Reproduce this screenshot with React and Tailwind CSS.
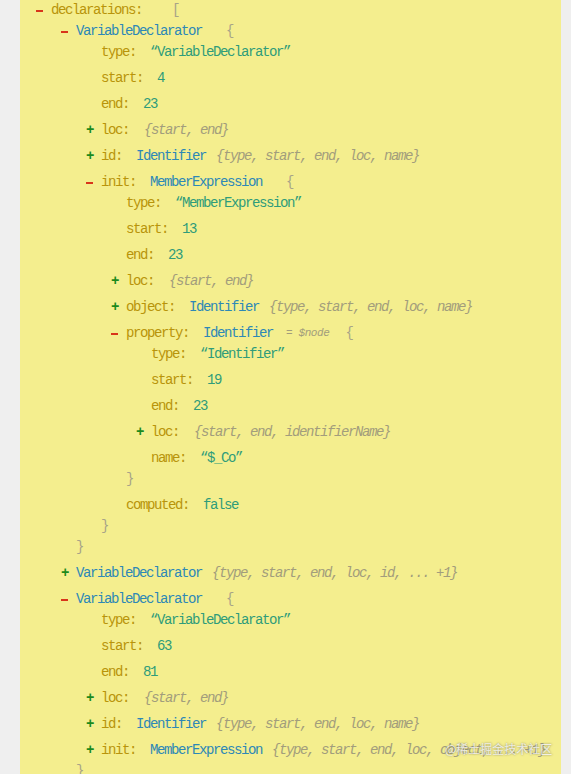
import React from "react";

function Sign({ t }) {
  if (t === "-") {
    return (
      <span className="-ml-[15px] w-[15px] h-[21px] shrink-0 flex items-center">
        <span className="block w-[7px] h-[2px] bg-[#d8351b]" />
      </span>
    );
  }
  return (
    <span className="-ml-[15px] w-[15px] shrink-0 font-bold text-[#1c8a1c]">+</span>
  );
}

function Line({ children }) {
  return <div className="h-[21px] flex items-center whitespace-pre">{children}</div>;
}

function Key({ k }) {
  return <span className="text-[#b8940a]">{k}:</span>;
}

function Leaf({ k, v }) {
  return (
    <Line>
      <Key k={k} />
      <span className="ml-[14px] text-[#2f9c7a]">{v}</span>
    </Line>
  );
}

function Summary({ children, ml }) {
  return <span className={`${ml} italic text-[#a29d7c]`}>{children}</span>;
}

function Collapsed({ k, type, sum }) {
  return (
    <Line>
      <Sign t="+" />
      {k && <Key k={k} />}
      {type && <span className={`${k ? "ml-[14px]" : ""} text-[#2d88b6]`}>{type}</span>}
      <Summary ml={type ? "ml-[10px]" : "ml-[15px]"}>{sum}</Summary>
    </Line>
  );
}

function Expanded({ k, type, extra, open, openMl, close, children }) {
  return (
    <div className="flex flex-col">
      <Line>
        <Sign t="-" />
        {k && <Key k={k} />}
        {type && <span className={`${k ? "ml-[14px]" : ""} text-[#2d88b6]`}>{type}</span>}
        {extra}
        <span className={`${openMl} text-[#a8a488]`}>{open}</span>
      </Line>
      <div className="pl-[25px] flex flex-col gap-[5px]">{children}</div>
      {close && (
        <Line>
          <span className="text-[#a8a488]">{close}</span>
        </Line>
      )}
    </div>
  );
}

export default function App() {
  return (
    <div className="w-[571px] h-[774px] bg-[#efefef] flex font-['Liberation_Mono',monospace] text-[14px] tracking-[-1.4px] relative">
      <div className="ml-[20px] w-[541px] h-[774px] bg-[#f4ee8e] overflow-hidden pl-[31px]">
        <Expanded k="declarations" open="[" openMl="ml-[30px]">
          <Expanded type="VariableDeclarator" open="{" openMl="ml-[24px]" close="}">
            <Leaf k="type" v="“VariableDeclarator”" />
            <Leaf k="start" v="4" />
            <Leaf k="end" v="23" />
            <Collapsed k="loc" sum="{start, end}" />
            <Collapsed k="id" type="Identifier" sum="{type, start, end, loc, name}" />
            <Expanded k="init" type="MemberExpression" open="{" openMl="ml-[24px]" close="}">
              <Leaf k="type" v="“MemberExpression”" />
              <Leaf k="start" v="13" />
              <Leaf k="end" v="23" />
              <Collapsed k="loc" sum="{start, end}" />
              <Collapsed k="object" type="Identifier" sum="{type, start, end, loc, name}" />
              <Expanded
                k="property"
                type="Identifier"
                extra={
                  <span className="ml-[13px] italic text-[11px] tracking-[-0.4px] text-[#a29d7c]">= $node</span>
                }
                open="{"
                openMl="ml-[16px]"
                close="}"
              >
                <Leaf k="type" v="“Identifier”" />
                <Leaf k="start" v="19" />
                <Leaf k="end" v="23" />
                <Collapsed k="loc" sum="{start, end, identifierName}" />
                <Leaf k="name" v="“$_Co”" />
              </Expanded>
              <Leaf k="computed" v="false" />
            </Expanded>
          </Expanded>
          <Collapsed type="VariableDeclarator" sum="{type, start, end, loc, id, ... +1}" />
          <Expanded type="VariableDeclarator" open="{" openMl="ml-[24px]" close="}">
            <Leaf k="type" v="“VariableDeclarator”" />
            <Leaf k="start" v="63" />
            <Leaf k="end" v="81" />
            <Collapsed k="loc" sum="{start, end}" />
            <Collapsed k="id" type="Identifier" sum="{type, start, end, loc, name}" />
            <Collapsed k="init" type="MemberExpression" sum="{type, start, end, loc, object, ... +1}" />
          </Expanded>
        </Expanded>
      </div>
      <div className="absolute left-[445px] top-[740px] font-['Noto_Sans_CJK_SC',sans-serif] text-[12px] tracking-normal text-white/80 [text-shadow:0_0_2px_rgba(90,90,90,0.8)]">
        @稀土掘金技术社区
      </div>
    </div>
  );
}
